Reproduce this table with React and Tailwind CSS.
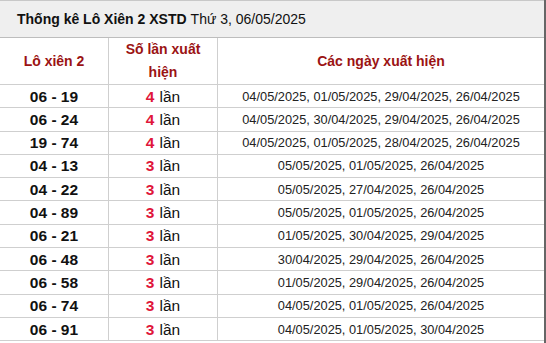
import { Fragment } from "react";

const rows = [
  ["06 - 19", 4, "04/05/2025, 01/05/2025, 29/04/2025, 26/04/2025"],
  ["06 - 24", 4, "04/05/2025, 30/04/2025, 29/04/2025, 26/04/2025"],
  ["19 - 74", 4, "04/05/2025, 01/05/2025, 28/04/2025, 26/04/2025"],
  ["04 - 13", 3, "05/05/2025, 01/05/2025, 26/04/2025"],
  ["04 - 22", 3, "05/05/2025, 27/04/2025, 26/04/2025"],
  ["04 - 89", 3, "05/05/2025, 01/05/2025, 26/04/2025"],
  ["06 - 21", 3, "01/05/2025, 30/04/2025, 29/04/2025"],
  ["06 - 48", 3, "30/04/2025, 29/04/2025, 26/04/2025"],
  ["06 - 58", 3, "01/05/2025, 29/04/2025, 26/04/2025"],
  ["06 - 74", 3, "04/05/2025, 01/05/2025, 26/04/2025"],
  ["06 - 91", 3, "04/05/2025, 01/05/2025, 30/04/2025"],
];

export default function App() {
  return (
    <div className="w-[546px] h-[343px] overflow-hidden bg-white border-r-2 border-[#666] font-['Liberation_Sans',Arial,sans-serif]">
      {/* title bar */}
      <div className="h-[38px] bg-[#efefef] border-t border-b border-t-[#c8c8c8] border-b-[#bdbdbd] flex items-center pl-[17px] text-[14px] text-[#111]">
        <span className="font-bold">Thống kê Lô Xiên 2 XSTD</span>
        <span className="ml-[4px]">Thứ 3, 06/05/2025</span>
      </div>

      <div className="grid grid-cols-[109px_109px_1fr]">
        {/* header row */}
        <div className="h-[47px] border-r border-b border-[#cfcfcf] flex items-center justify-center text-[14px] font-bold text-[#9b1313]">
          Lô xiên 2
        </div>
        <div className="h-[47px] border-r border-b border-[#cfcfcf] flex items-center justify-center text-center px-[4px] leading-[23px] text-[14px] font-bold text-[#9b1313]">
          Số lần xuất hiện
        </div>
        <div className="h-[47px] border-b border-[#cfcfcf] flex items-center justify-center text-[14px] font-bold text-[#9b1313]">
          Các ngày xuất hiện
        </div>

        {rows.map(([pair, n, dates]) => (
          <Fragment key={pair}>
            <div className="h-[23.3px] border-r border-b border-[#cfcfcf] flex items-center justify-center text-[15.5px] font-bold text-[#111]">
              {pair}
            </div>
            <div className="h-[23.3px] border-r border-b border-[#cfcfcf] flex items-center justify-center text-[15.5px] text-[#111]">
              <span className="font-bold text-[#e0163a] mr-[5px]">{n}</span>
              <span>lần</span>
            </div>
            <div className="h-[23.3px] border-b border-[#cfcfcf] flex items-center justify-center text-[12.8px] text-[#222]">
              {dates}
            </div>
          </Fragment>
        ))}
      </div>
    </div>
  );
}
